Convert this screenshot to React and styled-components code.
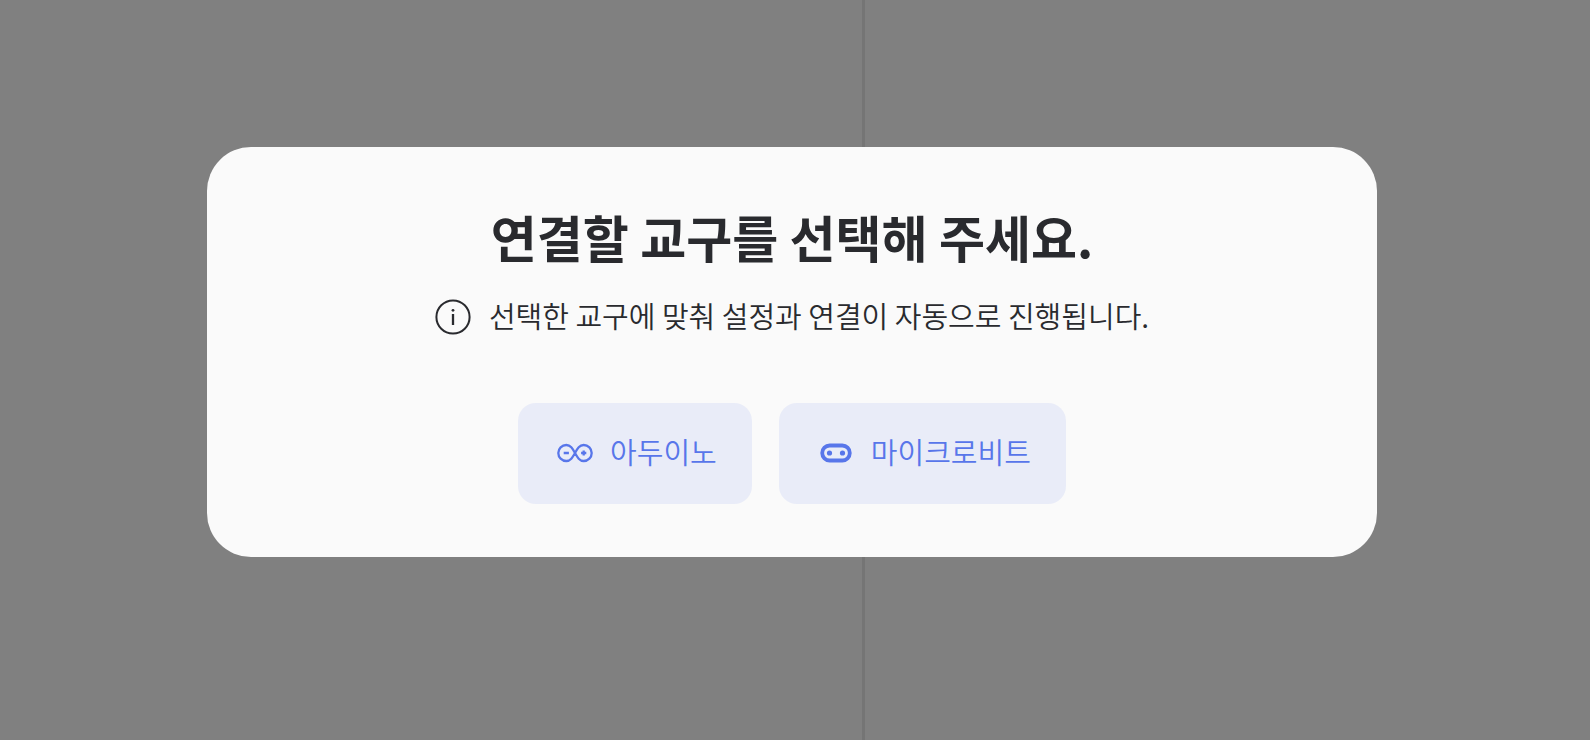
import React from "react";
import styled, { createGlobalStyle } from "styled-components";

const GlobalStyle = createGlobalStyle`
  *, *::before, *::after { box-sizing: border-box; }
  body {
    margin: 0;
    background: #808080;
    color: #292a2e;
    font-family: "Noto Sans CJK KR", "Noto Sans", sans-serif;
  }
`;

const Page = styled.div`
  position: relative;
  min-height: 100vh;
  display: grid;
`;

const Panels = styled.div`
  display: grid;
  grid-template-columns: 865fr 725fr;
  grid-area: 1 / 1;
`;

const Panel = styled.div`
  border-right: ${(p) => (p.$divided ? "3px solid #757575" : "0")};
`;

const Overlay = styled.div`
  grid-area: 1 / 1;
  z-index: 1;
  display: flex;
  align-items: center;
  justify-content: center;
  padding: 0 6px 36px 0;
`;

const Dialog = styled.section`
  width: 74%;
  max-width: 1170px;
  display: flex;
  flex-direction: column;
  align-items: center;
  padding: 53px 48px;
  border-radius: 44px;
  background: #fafafa;
`;

const Title = styled.h1`
  margin: 0;
  font-size: 50px;
  font-weight: 700;
  line-height: 72px;
`;

const Notice = styled.p`
  margin: 23px 0 0;
  display: flex;
  align-items: center;
  gap: 18px;
  font-size: 29px;
  font-weight: 350;
`;

const Label = styled.span`
  padding-bottom: 4px;
  line-height: 40px;
`;

const Actions = styled.div`
  display: flex;
  gap: 27px;
  margin-top: 64px;
`;

const DeviceButton = styled.button`
  display: flex;
  align-items: center;
  gap: 15px;
  padding: 28px 35px 29px 37px;
  border: 0;
  border-radius: 18px;
  background: #e9ecf8;
  color: #5876ea;
  font-family: inherit;
  font-size: 29px;
  font-weight: 350;
  cursor: pointer;
`;

const Icon = styled.svg`
  flex: none;
  width: ${(p) => p.$size}px;
  height: ${(p) => p.$size}px;
  fill: none;
  stroke: currentColor;
`;

function InfoIcon() {
  return (
    <Icon $size={36} viewBox="0 0 36 36" strokeWidth="2" aria-hidden="true">
      <circle cx="18" cy="18" r="16.6" />
      <path d="M18 15v11" strokeWidth="2.3" />
      <circle cx="18" cy="11.3" r="1.4" fill="currentColor" stroke="none" />
    </Icon>
  );
}

function ArduinoIcon() {
  return (
    <Icon $size={40} viewBox="0 0 40 40" strokeWidth="2.3" aria-hidden="true">
      <path d="M20 20C17.5 15.5 15.5 12 11.3 12a8 8 0 0 0 0 16C15.5 28 17.5 24.5 20 20C22.5 15.5 24.5 12 28.7 12a8 8 0 0 1 0 16C24.5 28 22.5 24.5 20 20Z" />
      <path d="M8.7 20h5.200M26.100 20h5.200M28.700 17.400v5.200" />
    </Icon>
  );
}

function MicrobitIcon() {
  return (
    <Icon $size={40} viewBox="0 0 40 40" aria-hidden="true">
      <rect x="6.2" y="12.5" width="27.6" height="15" rx="7.5" strokeWidth="3.8" />
      <g fill="currentColor" stroke="none">
        <circle cx="13.5" cy="20" r="2.6" />
        <circle cx="26.5" cy="20" r="2.6" />
      </g>
    </Icon>
  );
}

export default function App() {
  return (
    <>
      <GlobalStyle />
      <Page>
        <Panels>
          <Panel $divided />
          <Panel />
        </Panels>
        <Overlay>
          <Dialog role="dialog" aria-modal="true" aria-labelledby="dialog-title">
            <Title id="dialog-title">연결할 교구를 선택해 주세요.</Title>
            <Notice>
              <InfoIcon />
              <Label>선택한 교구에 맞춰 설정과 연결이 자동으로 진행됩니다.</Label>
            </Notice>
            <Actions>
              <DeviceButton type="button">
                <ArduinoIcon />
                <Label>아두이노</Label>
              </DeviceButton>
              <DeviceButton type="button">
                <MicrobitIcon />
                <Label>마이크로비트</Label>
              </DeviceButton>
            </Actions>
          </Dialog>
        </Overlay>
      </Page>
    </>
  );
}
